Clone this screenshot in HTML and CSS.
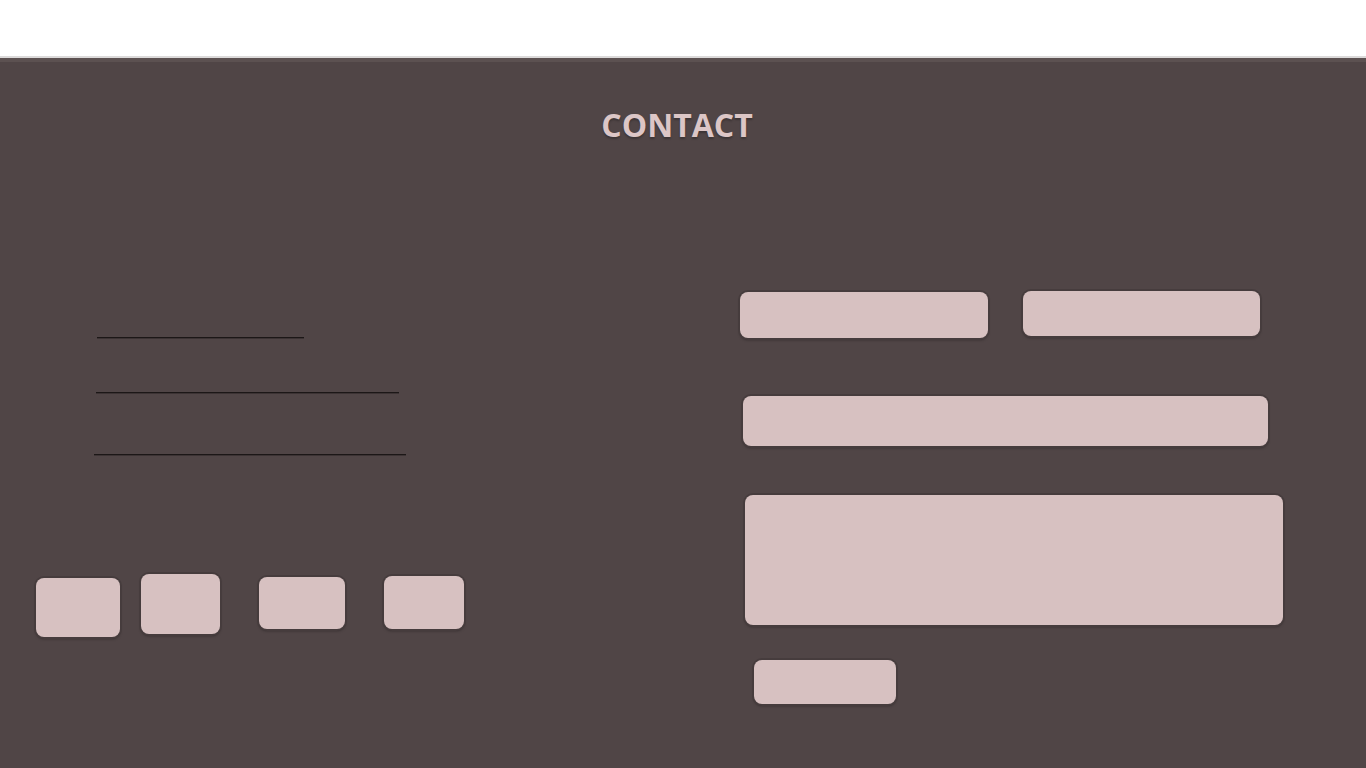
FILE: index.html
```html
<!DOCTYPE html>
<html lang="en">
<head>
    <meta charset="UTF-8">
    <meta name="viewport" content="width=device-width, initial-scale=1.0">
    <title>Contact</title>
    <link rel="stylesheet" href="styles.css">
</head>
<body>
    <header class="topbar"></header>

    <section class="contact">
        <h2 class="contact-title">CONTACT</h2>

        <div class="contact-body">
            <!-- Contact details -->
            <div class="info">
                <div class="info-line line-1"></div>
                <div class="info-line line-2"></div>
                <div class="info-line line-3"></div>

                <div class="social-row">
                    <a class="social social-1" href="#"></a>
                    <a class="social social-2" href="#"></a>
                    <a class="social social-3" href="#"></a>
                    <a class="social social-4" href="#"></a>
                </div>
            </div>

            <!-- Contact form -->
            <form class="contact-form" onsubmit="return false">
                <div class="form-row">
                    <input type="text" class="field field-name">
                    <input type="text" class="field field-email">
                </div>
                <input type="text" class="field field-subject">
                <textarea class="field field-message"></textarea>
                <button type="submit" class="field send-button"></button>
            </form>
        </div>
    </section>
</body>
</html>
```

FILE: styles.css
```css
html, body {
    margin: 0;
    padding: 0;
}
body {
    background: #504546;
    font-family: "Open Sans", "Liberation Sans", sans-serif;
}
.topbar {
    height: 56px;
    background: #fff;
    border-bottom: 2px solid #dcdada;
}
.contact {
    height: 706px;
    background: #504546;
    border-top: 4px solid #5c5151;
}
.contact-title {
    margin: 0;
    padding: 43px 12px 0 0;
    line-height: 40px;
    font-size: 32px;
    font-weight: 700;
    text-align: center;
    color: #dcc6c6;
    text-shadow: 0 2px 2px rgba(0, 0, 0, 0.25);
}
.contact-body {
    display: flex;
    align-items: flex-start;
    margin-top: 146px;
}

/* left column */
.info {
    width: 700px;
    display: flex;
    flex-direction: column;
    align-items: flex-start;
}
.info-line {
    height: 1px;
    background: #1c1717;
    box-shadow: 0 1px 0 rgba(0, 0, 0, 0.25);
}
.line-1 {
    margin: 46px 0 0 97px;
    width: 207px;
}
.line-2 {
    margin: 54px 0 0 96px;
    width: 303px;
}
.line-3 {
    margin: 61px 0 0 94px;
    width: 312px;
}
.social-row {
    display: flex;
    align-items: flex-start;
    margin-top: 119px;
    padding-left: 36px;
}
.social {
    display: block;
    background: #d7c1c1;
    border-radius: 8px;
    box-shadow: 0 0 0 2px #463c3d, 0 2px 3px rgba(0, 0, 0, 0.35);
}
.social-1 {
    margin-top: 4px;
    width: 84px;
    height: 59px;
}
.social-2 {
    margin-left: 21px;
    width: 79px;
    height: 60px;
}
.social-3 {
    margin: 3px 0 0 39px;
    width: 86px;
    height: 52px;
}
.social-4 {
    margin: 2px 0 0 39px;
    width: 80px;
    height: 53px;
}

/* right column */
.contact-form {
    display: flex;
    flex-direction: column;
    align-items: flex-start;
}
.form-row {
    display: flex;
    align-items: flex-start;
}
.field {
    display: block;
    box-sizing: border-box;
    margin: 0;
    padding: 0;
    border: none;
    outline: none;
    background: #d7c1c1;
    border-radius: 8px;
    box-shadow: 0 0 0 2px #463c3d, 0 2px 3px rgba(0, 0, 0, 0.35);
    font-family: inherit;
}
.field-name {
    margin: 1px 0 0 40px;
    width: 248px;
    height: 46px;
}
.field-email {
    margin-left: 35px;
    width: 237px;
    height: 45px;
}
.field-subject {
    margin: 58px 0 0 43px;
    width: 525px;
    height: 50px;
}
.field-message {
    margin: 49px 0 0 45px;
    width: 538px;
    height: 130px;
    resize: none;
}
.send-button {
    margin: 35px 0 0 54px;
    width: 142px;
    height: 44px;
    cursor: pointer;
}
```
